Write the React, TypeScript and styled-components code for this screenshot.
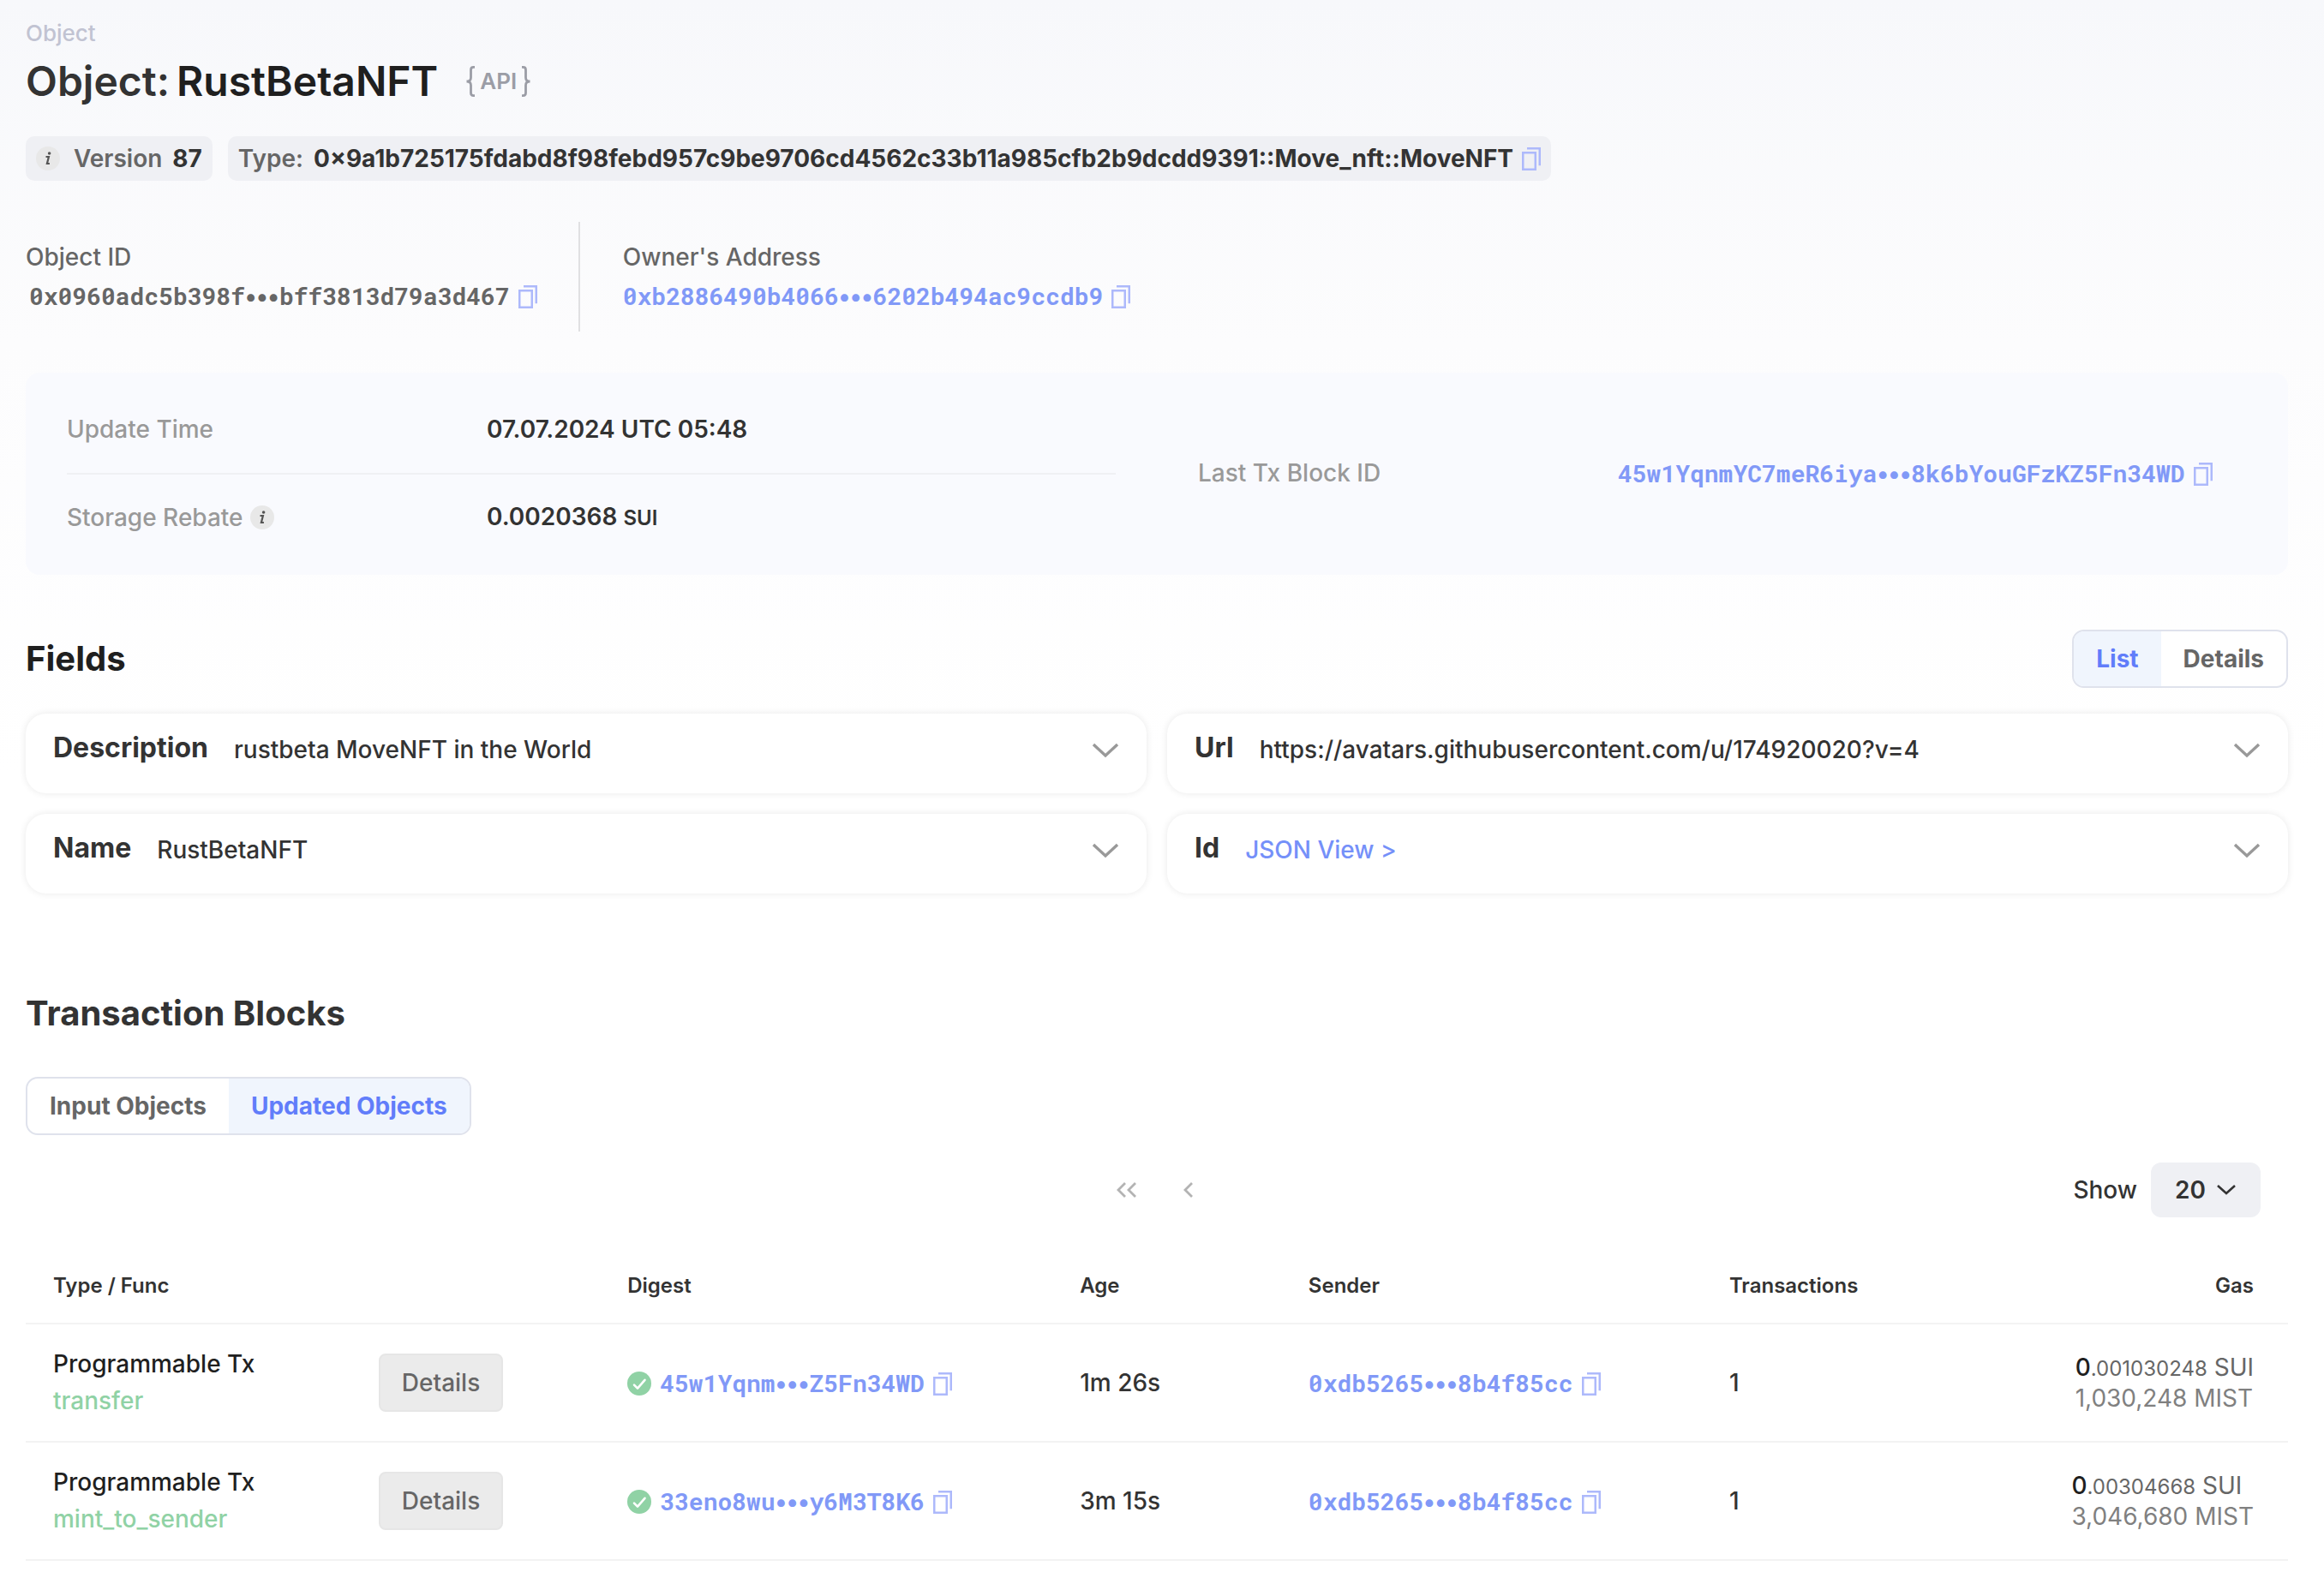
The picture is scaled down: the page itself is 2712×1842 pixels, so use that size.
import React, { useState } from "react";
import styled, { createGlobalStyle } from "styled-components";

const sans = `Inter, "Liberation Sans", sans-serif`;
const mono = `"Roboto Mono", "Liberation Mono", "DejaVu Sans Mono", monospace`;

const Global = createGlobalStyle`
  * { box-sizing: border-box; }
  body {
    margin: 0;
    background: #fff linear-gradient(#f7f8fb, #fcfcfd 400px, #fff 900px) no-repeat;
    color: #333;
    font: 500 28px/34px ${sans};
    -webkit-font-smoothing: antialiased;
  }
  button, select { font: inherit; color: inherit; margin: 0; }
  h1, h2, h3, p, dl, dd, dt { margin: 0; }
`;

const Page = styled.main`
  padding: 22px 42px 22px 30px;
`;

const Crumb = styled.p`
  color: #c1c3d2;
  font-size: 26px;
  line-height: 34px;
`;

const TitleRow = styled.div`
  display: flex;
  align-items: center;
  gap: 32px;
  margin-top: 8px;
`;

const Title = styled.h1`
  display: flex;
  gap: 8px;
  font-size: 48px;
  line-height: 62px;
  font-weight: 600;
  color: #333;
  strong { color: #1f1f1f; font-weight: 600; }
`;

const ApiLink = styled.a`
  display: flex;
  align-items: center;
  gap: 5px;
  color: #9b9da6;
  font-size: 26px;
  font-weight: 600;
  text-decoration: none;
`;

const Chips = styled.div`
  display: flex;
  gap: 18px;
  margin-top: 33px;
`;

const InfoDot = styled.span`
  display: inline-flex;
  flex: none;
  width: 28px;
  height: 28px;
  border-radius: 50%;
  background: #e8e8e8;
`;

const Chip = styled.div`
  display: flex;
  align-items: center;
  gap: 12px;
  height: 52px;
  padding: 0 12px;
  border-radius: 10px;
  background: #eff0f4;
  color: #666;
  font-weight: 600;
  strong { color: #333; font-weight: 700; }
  ${InfoDot} { margin-right: 4px; }
`;

const CopyButton = styled.button`
  display: inline-flex;
  flex: none;
  padding: 0;
  border: 0;
  background: none;
  color: #adb9fb;
`;

const WithCopy = styled.span`
  display: inline-flex;
  align-items: center;
  gap: 10px;
  vertical-align: middle;
`;

const Ids = styled.div`
  display: flex;
  margin-top: 48px;
`;

const IdBlock = styled.div`
  display: flex;
  flex-direction: column;
  justify-content: center;
  gap: 12px;
  height: 128px;
  padding-right: 48px;
  color: #666;
  & + & {
    padding-left: 50px;
    border-left: 2px solid #e0e0e2;
  }
`;

const Hash = styled.span<{ $link?: boolean }>`
  padding-left: ${(p) => (p.$link ? "0" : "4px")};
  font-family: ${mono};
  font-weight: 700;
  color: ${(p) => (p.$link ? "#8199f7" : "#666")};
  text-decoration: none;
  white-space: nowrap;
`;

const Dots = styled.span`
  font-family: ${sans};
`;

const Panel = styled.section`
  display: grid;
  grid-template-columns: 1fr 1fr;
  column-gap: 96px;
  margin-top: 48px;
  padding: 15px 48px 17px;
  border-radius: 16px;
  background: #f9fafe;
`;

const PanelCol = styled.dl`
  display: flex;
  flex-direction: column;
  justify-content: center;
`;

const PanelRow = styled.div`
  display: flex;
  align-items: center;
  height: 102px;
  & + & { border-top: 2px solid #f0f1f4; }
  dt {
    display: flex;
    align-items: center;
    gap: 8px;
    width: 490px;
    color: #999;
  }
  dd { font-weight: 600; }
  small { font-size: 24px; }
`;

const SectionHead = styled.div`
  display: flex;
  align-items: center;
  justify-content: space-between;
  margin-top: 64px;
`;

const Heading = styled.h2<{ $dark?: boolean }>`
  font-size: 40px;
  line-height: 48px;
  font-weight: 700;
  color: ${(p) => (p.$dark ? "#1f1f1f" : "#333")};
`;

const Segmented = styled.div`
  display: inline-flex;
  height: 68px;
  border: 2px solid #dfe2ec;
  border-radius: 14px;
  overflow: hidden;
  background: #fff;
`;

const Segment = styled.button<{ $on: boolean }>`
  border: 0;
  padding: 0 26px;
  font-weight: 700;
  background: ${(p) => (p.$on ? "#f0f5fd" : "transparent")};
  color: ${(p) => (p.$on ? "#617dfa" : "#666")};
`;

const Cards = styled.div`
  display: grid;
  grid-template-columns: 1fr 1fr;
  gap: 24px;
  margin-top: 30px;
`;

const Card = styled.article`
  display: flex;
  align-items: flex-start;
  height: 93px;
  padding: 20px 32px;
  border-radius: 24px;
  background: #fff;
  box-shadow: 0 0 8px rgba(0, 0, 0, 0.09);
  h3 {
    font-size: 32px;
    line-height: 40px;
    font-weight: 700;
    margin-right: 30px;
  }
  p { flex: 1; line-height: 44px; }
  a { color: #7590f9; text-decoration: none; }
`;

const PlainButton = styled.button`
  display: inline-flex;
  align-items: center;
  justify-content: center;
  height: 46px;
  padding: 0;
  border: 0;
  background: none;
  color: #999;
`;

const Blocks = styled.section`
  display: flex;
  flex-direction: column;
  align-items: flex-start;
  gap: 50px;
  margin-top: 116px;
`;

const Toolbar = styled.div`
  display: grid;
  grid-template-columns: 1fr auto 1fr;
  align-items: center;
  margin-top: 32px;
  padding: 0 32px;
`;

const Pager = styled.div`
  display: flex;
  grid-column: 2;
  gap: 52px;
  width: 96px;
  button { color: #b3b3b3; }
`;

const ShowLabel = styled.label`
  display: flex;
  align-items: center;
  justify-self: end;
  gap: 16px;
`;

const SelectBox = styled.span`
  display: grid;
  align-items: center;
  height: 64px;
  width: 128px;
  border-radius: 12px;
  background: #eff0f4;
  select, svg { grid-area: 1 / 1; }
  svg { justify-self: end; margin-right: 28px; pointer-events: none; }
  select {
    appearance: none;
    height: 64px;
    padding: 0 28px;
    border: 0;
    background: none;
    font-weight: 600;
  }
`;

const Table = styled.table`
  width: 100%;
  margin-top: 28px;
  table-layout: fixed;
  border-collapse: collapse;
  th, td {
    padding: 0;
    border-bottom: 2px solid #f3f3f3;
    text-align: left;
    vertical-align: middle;
    white-space: nowrap;
  }
  th { height: 96px; padding-top: 8px; font-size: 24px; font-weight: 600; }
  td { height: 138px; }
  th:first-child, td:first-child { padding-left: 32px; }
  th:last-child, td:last-child { padding-right: 40px; text-align: right; }
`;

const Func = styled.div`
  color: #1f1f1f;
  line-height: 43px;
  span { display: block; color: #90d2a5; }
`;

const DetailsButton = styled.button`
  height: 68px;
  padding: 0 25px;
  border: 2px solid #e6e6e6;
  border-radius: 8px;
  background: #ebebeb;
  color: #666;
`;

const Gas = styled.div`
  display: inline-block;
  text-align: left;
  line-height: 36px;
  color: #808080;
  font-weight: 400;
  vertical-align: middle;
  p { color: #666; }
  b { color: #1f1f1f; font-weight: 500; }
  small { font-size: 24px; line-height: 24px; }
`;

const CopyIcon = () => (
  <svg width="22" height="27" viewBox="0 0 22 27" fill="none" stroke="currentColor" strokeWidth="2.5">
    <path d="M1.250 6.250h14.500v19.500h-14.500zM6 1.250h14.750v20" />
  </svg>
);

const Info = () => (
  <InfoDot>
    <svg width="28" height="28" viewBox="0 0 28 28" fill="none" stroke="#555" strokeWidth="2.2">
      <path d="M11.5 12h3.4l-2 8h3" />
      <circle cx="15.6" cy="8" r="1.8" fill="#555" stroke="none" />
    </svg>
  </InfoDot>
);

const Brace = ({ flip }: { flip?: boolean }) => (
  <svg width="12" height="36" viewBox="0 0 12 36" fill="none" stroke="currentColor" strokeWidth="2.8">
    <path
      d={flip ? "M1 1.4h1.5q3 0 3 3v9q0 4.6 5 4.6q-5 0-5 4.6v9q0 3-3 3H1" : "M11 1.4H9.5q-3 0-3 3v9q0 4.6-5 4.6q5 0 5 4.6v9q0 3 3 3H11"}
    />
  </svg>
);

const Chevron = () => (
  <svg width="32" height="18" viewBox="0 0 32 18" fill="none" stroke="currentColor" strokeWidth="3.4">
    <path d="M2 2l14 13L30 2" />
  </svg>
);

const Check = () => (
  <svg width="28" height="28" viewBox="0 0 28 28" fill="none">
    <circle cx="14" cy="14" r="14" fill="#90d2a5" />
    <path
      d="M8 15.6l4 4l8.500-9.800"
      stroke="#fff"
      strokeWidth="2.6"
      strokeLinecap="round"
      strokeLinejoin="round"
    />
  </svg>
);

const HashText = ({ head, tail, href }: { head: string; tail: string; href?: string }) => (
  <WithCopy>
    <Hash as={href ? "a" : "span"} href={href} $link={!!href}>
      {head}
      <Dots>•••</Dots>
      {tail}
    </Hash>
    <CopyButton aria-label="Copy">
      <CopyIcon />
    </CopyButton>
  </WithCopy>
);

const Toggle = ({ options, initial }: { options: string[]; initial: string }) => {
  const [value, setValue] = useState(initial);
  return (
    <Segmented>
      {options.map((o) => (
        <Segment key={o} $on={o === value} aria-pressed={o === value} onClick={() => setValue(o)}>
          {o}
        </Segment>
      ))}
    </Segmented>
  );
};

const fields = [
  { name: "Description", value: "rustbeta MoveNFT in the World" },
  { name: "Url", value: "https://avatars.githubusercontent.com/u/174920020?v=4" },
  { name: "Name", value: "RustBetaNFT" },
  { name: "Id", value: "JSON View >", link: true },
];

const rows = [
  { func: "transfer", head: "45w1Yqnm", tail: "Z5Fn34WD", age: "1m 26s", sui: ".001030248", mist: "1,030,248 MIST" },
  { func: "mint_to_sender", head: "33eno8wu", tail: "y6M3T8K6", age: "3m 15s", sui: ".00304668", mist: "3,046,680 MIST" },
];

export default function App() {
  return (
    <Page>
      <Global />
      <Crumb>Object</Crumb>
      <TitleRow>
        <Title>
          <span>Object:</span>
          <strong>RustBetaNFT</strong>
        </Title>
        <ApiLink href="#api">
          <Brace />
          API
          <Brace flip />
        </ApiLink>
      </TitleRow>

      <Chips>
        <Chip>
          <Info />
          <span>Version</span>
          <strong>87</strong>
        </Chip>
        <Chip>
          <span>Type:</span>
          <WithCopy>
            <strong>0×9a1b725175fdabd8f98febd957c9be9706cd4562c33b11a985cfb2b9dcdd9391::Move_nft::MoveNFT</strong>
            <CopyButton aria-label="Copy">
              <CopyIcon />
            </CopyButton>
          </WithCopy>
        </Chip>
      </Chips>

      <Ids>
        <IdBlock>
          <span>Object ID</span>
          <HashText head="0x0960adc5b398f" tail="bff3813d79a3d467" />
        </IdBlock>
        <IdBlock>
          <span>Owner's Address</span>
          <HashText head="0xb2886490b4066" tail="6202b494ac9ccdb9" href="#owner" />
        </IdBlock>
      </Ids>

      <Panel>
        <PanelCol>
          <PanelRow>
            <dt>Update Time</dt>
            <dd>07.07.2024 UTC 05:48</dd>
          </PanelRow>
          <PanelRow>
            <dt>
              Storage Rebate <Info />
            </dt>
            <dd>
              0.0020368 <small>SUI</small>
            </dd>
          </PanelRow>
        </PanelCol>
        <PanelCol>
          <PanelRow>
            <dt>Last Tx Block ID</dt>
            <dd>
              <HashText head="45w1YqnmYC7meR6iya" tail="8k6bYouGFzKZ5Fn34WD" href="#block" />
            </dd>
          </PanelRow>
        </PanelCol>
      </Panel>

      <SectionHead>
        <Heading $dark>Fields</Heading>
        <Toggle options={["List", "Details"]} initial="List" />
      </SectionHead>
      <Cards>
        {fields.map((f) => (
          <Card key={f.name}>
            <h3>{f.name}</h3>
            <p>{f.link ? <a href="#json">{f.value}</a> : f.value}</p>
            <PlainButton aria-label={`Expand ${f.name}`}>
              <Chevron />
            </PlainButton>
          </Card>
        ))}
      </Cards>

      <Blocks>
        <Heading>Transaction Blocks</Heading>
        <Toggle options={["Input Objects", "Updated Objects"]} initial="Updated Objects" />
      </Blocks>

      <Toolbar>
        <Pager>
          <PlainButton aria-label="First page">
            <svg width="26" height="18" viewBox="0 0 26 18" fill="none" stroke="currentColor" strokeWidth="2.8">
              <path d="M11 1L3 9l8 8M23 1l-8 8l8 8" />
            </svg>
          </PlainButton>
          <PlainButton aria-label="Previous page">
            <svg width="14" height="18" viewBox="0 0 14 18" fill="none" stroke="currentColor" strokeWidth="2.8">
              <path d="M11 1L3 9l8 8" />
            </svg>
          </PlainButton>
        </Pager>
        <ShowLabel>
          Show
          <SelectBox>
            <select defaultValue="20">
              <option>20</option>
              <option>40</option>
              <option>60</option>
            </select>
            <svg width="24" height="14" viewBox="0 0 24 14" fill="none" stroke="#333" strokeWidth="2.6">
              <path d="M2 2l10 9L22 2" />
            </svg>
          </SelectBox>
        </ShowLabel>
      </Toolbar>

      <Table>
        <colgroup>
          <col style={{ width: "15.6%" }} />
          <col style={{ width: "11%" }} />
          <col style={{ width: "20%" }} />
          <col style={{ width: "10.1%" }} />
          <col style={{ width: "18.6%" }} />
          <col style={{ width: "12%" }} />
          <col />
        </colgroup>
        <thead>
          <tr>
            <th>Type / Func</th>
            <th />
            <th>Digest</th>
            <th>Age</th>
            <th>Sender</th>
            <th>Transactions</th>
            <th>Gas</th>
          </tr>
        </thead>
        <tbody>
          {rows.map((r) => (
            <tr key={r.func}>
              <td>
                <Func>
                  Programmable Tx
                  <span>{r.func}</span>
                </Func>
              </td>
              <td>
                <DetailsButton>Details</DetailsButton>
              </td>
              <td>
                <WithCopy>
                  <Check />
                  <HashText head={r.head} tail={r.tail} href="#tx" />
                </WithCopy>
              </td>
              <td>{r.age}</td>
              <td>
                <HashText head="0xdb5265" tail="8b4f85cc" href="#sender" />
              </td>
              <td>1</td>
              <td>
                <Gas>
                  <p>
                    <b>0</b>
                    <small>{r.sui}</small> SUI
                  </p>
                  {r.mist}
                </Gas>
              </td>
            </tr>
          ))}
        </tbody>
      </Table>
    </Page>
  );
}
